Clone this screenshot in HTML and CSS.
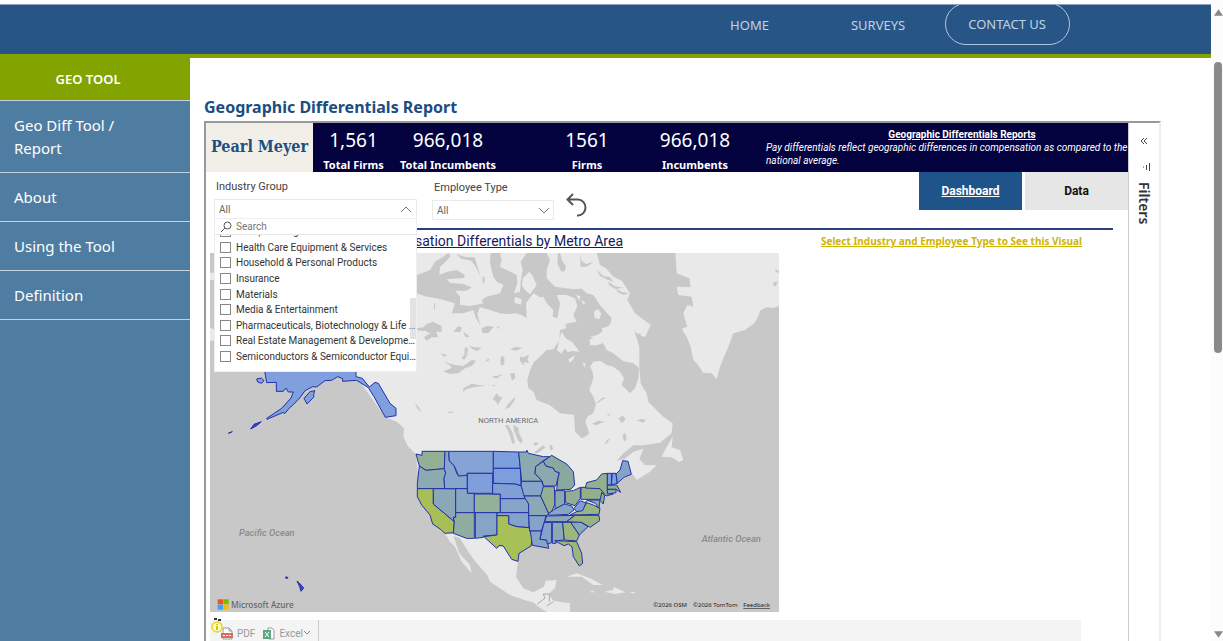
FILE: index.html
```
<!DOCTYPE html>
<html lang="en">
  <head>
    <meta charset="UTF-8" />
    <meta name="viewport" content="width=device-width, initial-scale=1" />
    <title>Geographic Differentials Report</title>
    <link rel="stylesheet" href="styles.css">
  </head>
  <body>
    <div class="page">
      <header class="topbar">
        <nav class="topnav">
          <a href="#">HOME</a>
          <a href="#">SURVEYS</a>
          <a href="#" class="pill">CONTACT US</a>
        </nav>
      </header>

      <div class="columns">
        <!-- Side menu -->
        <nav class="sidebar">
          <div class="side-title">GEO TOOL</div>
          <a href="#">Geo Diff Tool / Report</a>
          <a href="#">About</a>
          <a href="#">Using the Tool</a>
          <a href="#">Definition</a>
        </nav>

        <main class="content">
          <h1>Geographic Differentials Report</h1>

          <div class="frame">
            <section class="report">
              <!-- Totals -->
              <div class="banner">
                <div class="logo">Pearl Meyer</div>
                <div class="card card-small"><strong>1,561</strong><span>Total Firms</span></div>
                <div class="card"><strong>966,018</strong><span>Total Incumbents</span></div>
                <div class="card card-gap"><strong>1561</strong><span>Firms</span></div>
                <div class="card"><strong>966,018</strong><span>Incumbents</span></div>
                <div class="about">
                  <h2>Geographic Differentials Reports</h2>
                  <p>Pay differentials reflect geographic differences in compensation as compared to the national average.</p>
                </div>
              </div>

              <!-- Slicers and tabs -->
              <div class="controls">
                <div class="slicer slicer-industry">
                  <label for="industry">Industry Group</label>
                  <button class="slicer-box" id="industry" aria-expanded="true">All
                    <svg class="chevron" viewBox="0 0 12 7"><path d="M1 6l5-5 5 5" /></svg>
                  </button>
                  <div class="menu">
                    <div class="menu-search">
                      <svg viewBox="0 0 12 12"><circle cx="7.500" cy="4.500" r="3.500" /><path d="M5 7L1 11" /></svg>
                      <input type="text" placeholder="Search" aria-label="Search" />
                    </div>
                    <div class="menu-view">
                      <ul>
                        <li><label><input type="checkbox" /><span>Food, Beverage &amp; Tobacco</span></label></li>
                        <li><label><input type="checkbox" /><span>Health Care Equipment &amp; Services</span></label></li>
                        <li><label><input type="checkbox" /><span>Household &amp; Personal Products</span></label></li>
                        <li><label><input type="checkbox" /><span>Insurance</span></label></li>
                        <li><label><input type="checkbox" /><span>Materials</span></label></li>
                        <li><label><input type="checkbox" /><span>Media &amp; Entertainment</span></label></li>
                        <li><label><input type="checkbox" /><span>Pharmaceuticals, Biotechnology &amp; Life Sciences</span></label></li>
                        <li><label><input type="checkbox" /><span>Real Estate Management &amp; Development</span></label></li>
                        <li><label><input type="checkbox" /><span>Semiconductors &amp; Semiconductor Equipment</span></label></li>
                        <li><label><input type="checkbox" /><span>Software &amp; Services</span></label></li>
                      </ul>
                      <div class="menu-thumb"></div>
                    </div>
                  </div>
                </div>
                <div class="slicer slicer-type">
                  <label for="type">Employee Type</label>
                  <div class="select-wrap">
                    <select class="slicer-box" id="type"><option>All</option></select>
                    <svg class="chevron" viewBox="0 0 12 7"><path d="M1 1l5 5 5-5" /></svg>
                  </div>
                </div>
                <button class="undo" aria-label="Reset">
                  <svg viewBox="0 0 22 24"><path d="M7 1L1.500 6.500 7 12M2 6.500h10a7.500 8 0 0 1 0 16h-1" /></svg>
                </button>
                <div class="tabs">
                  <button class="tab active">Dashboard</button>
                  <button class="tab">Data</button>
                </div>
              </div>

              <div class="titles">
                <h2 class="map-title">Compensation Differentials by Metro Area</h2>
                <p class="hint">Select Industry and Employee Type to See this Visual</p>
              </div>

              <!-- Map -->
              <svg class="map" viewBox="-570 9 1707 1077">
                <g class="land">
                  <path d="M-135 9H590L600 45 618 55 640 80 665 92 690 130 682 150 705 190 752 225 735 262 705 248 718 290 718 350 722 400 740 430 745 455 790 500 818 520 815 550 780 578 730 586 700 586 670 610 650 632 672 628 700 605 730 596 718 628 735 645 770 646 750 665 710 690 698 672 660 690 640 715 600 760 590 800 560 825 535 850 530 870 450 875 400 870 360 900 300 870 160 850 140 830 60 740 48 612 25 590 10 560 12 535-10 515-45 500-135 375Z" />
                  <path d="M818 560L800 590 785 620 815 622 838 636 850 630 840 600 815 592Z" />
                  <path d="M826 9H1137V168L1118 174 1100 172 1082 180 1072 205 1060 222 1035 240 1000 250 985 290 968 330 960 350 950 388 935 370 910 368 890 340 880 330 872 290 860 260 845 236 862 230 850 190 862 165 880 170 875 140 835 135 830 110 872 112 868 85 830 70Z" />
                  <path d="M-570 68h14v22h-14ZM-570 232l14 8v30l-14 4Z" />
                </g>
                <g class="land" transform="translate(0 540)">
                  <path d="M134 310L250 318 290 355 310 348 335 388 354 394 348 440 370 475 400 487 432 470 437 452 470 450 465 475 445 492 460 512 510 520V546H440L412 528 400 517 380 512 330 495 270 455 262 435 230 400 205 365 180 325 160 318 178 370 210 405 215 430 185 395 165 350 150 335Z" />
                  <path d="M500 440L530 430 570 445 608 465 580 465 545 440ZM612 485L640 480 640 470 677 487 645 492ZM568 487h18l-8-5ZM690 486h16l-8 5Z" />
                </g>
                <!-- lakes, bays and channels -->
                <g class="water">
                  <path d="M50 75L70 68 90 60 105 35 130 20 145 9 152 18 140 32 120 50 118 75 140 66 170 60 195 75 190 84 140 88 150 98 190 102 215 112 200 122 165 122 180 140 180 165 210 168 250 160 245 150 260 140 300 130 310 105 290 95 280 80 270 40 272 9 300 9 305 30 300 50 325 62 350 75 352 100 342 130 360 125 362 95 368 60 362 35 380 9 440 9 450 30 440 60 440 85 465 110 520 118 545 116 560 130 580 135 600 165 635 205 632 220 615 240 590 256 570 260 590 268 610 280 620 300 640 310 670 334 700 340 718 355 715 385 705 415 690 430 665 405 672 385 660 365 640 350 620 345 600 332 580 335 570 350 578 365 580 385 568 420 580 440 588 462 580 490 562 500 556 515 568 550 556 560 545 565 530 550 525 545 522 495 500 492 480 490 450 466 410 450 400 425 385 415 382 390 390 360 402 335 415 325 440 300 460 298 478 270 480 240 500 235 495 222 530 215 520 195 532 168 525 145 500 135 470 135 480 160 472 205 458 200 460 180 440 160 430 140 420 142 400 130 385 150 378 160 380 205 365 195 345 190 320 192 300 190 270 180 240 172 232 190 240 225 228 205 220 180 190 190 155 190 160 175 165 160 130 150 110 145 80 140 50 130Z" />
                  <path d="M50 235L70 232 80 222 100 215 112 222 125 228 125 245 108 245 115 262 95 262 80 272 72 262 90 250 75 242 55 242ZM130 335L165 345 190 348 215 330 228 332 215 348 195 355 175 370 150 372 130 364 155 354 150 346ZM190 415l25-14 20 4 22 2-30 3-28 8-10 8ZM290 430l8 10 10 0-8 14-8 12-2-10-12-8ZM345 440l-22 24-8 14 14-6 14-20ZM245 235l18-8 18 4-16 18-18 0ZM160 245l14-16 12 4-6 14ZM305 315l8 8 0 20-10 4-2-16ZM330 298l18-8 20 4-22 8ZM360 320l10 2 18-8-6 14 6 12-16-4 0 12-12-16ZM275 378l14 0 20-6-20 14ZM330 370l14 0 2 14-10 8ZM315 525l10 0 12 22 8 32-8 2-8-26ZM340 525l16 8 0 14 12 24-4 10-10-10-12-28ZM575 522l20-10 20 4-14 4-10 6ZM655 505l14-8 8 12-12 10ZM710 512l14-6 14 4-10 8-10-4ZM615 580l8-12 8-4-12 18ZM668 555l8-6 4 18-8 8ZM45 460l12 12 8 16-14-14ZM145 485h14v4h-14ZM400 575l8 4 8-4-4 10-8 2ZM590 457l18-14 12 0-16 8-10 8ZM102 160h3v18h-3ZM190 245l20 15-14 2ZM205 285l12 6 28 2-14 10-14-6ZM120 310l20 4-6 6ZM185 325l10-14 6 6-8 12ZM195 290l10 6-4 14 8 6-16-4ZM635 262l14 6-4 14-10-6ZM290 228l10 6-6 2ZM255 335l10-10 4 6ZM275 405h12l-6 4ZM430 400l8-4-6-2ZM620 492l10 0-2 6ZM448 588l6-4 6 12-8 6ZM400 610l30-25 6 8-22 16ZM750 9l8 0ZM725 400l12 14-6 4Z" />
                  <path d="M480 9l6 22 12 18-4 14-10 2-12-24 2-32ZM540 10l4 22 14 10 22-6-20 14-18 0ZM168 12l30 10 26 0 18 60-14-30-14-20-30-6ZM248 80h6v18h-6ZM590 60l20 18 20 4 10 14-20-8-20-10ZM625 95l20 14 24 4-22 4-20-12ZM650 118l16 8 22 4-18 4-18-8ZM700 240l14 12 10-2-8 10ZM640 230l20 20 18 36-20-20ZM1125 55l8 8 4-2v8l-10-4ZM1120 98l12-4-4 16-10-6Z" />
                </g>
                <!-- islands inside the bays -->
                <g class="land">
                  <path d="M582 185l12-8 10 14-6 16-14-2ZM570 268l18-6 20 18-18 6-20 0ZM505 328l20-12-6 14-10 8ZM548 340l8 0-2 14ZM485 245l12 20 20 12 22 28-24-2-12 4-8-12-12 16-12-10 6-30ZM368 85l20-20 10 12 12 28-20 28-14-12-10-14ZM345 140l20 8-2 16-20-6ZM305 15l45-4 6 16-12 22-14 12-22-22ZM605 235l30-10 22 14 8 16 22 14 8 36 22 36-20-6-20-22-20-6-18-24-26-22ZM528 135l14 4-4 12ZM545 150l12 8-8 6Z" />
                </g>

                <g class="states">
                  <path fill="#7f9fdf" d="M-405 330V369L-400 398-371 397V424L-350 424-342 414-335 426-320 426-327 444-355 475-400 505-399 508-352 488-345 490-330 472-322 466-300 443-285 422-262 410-250 411-225 392-205 391-187 380-172 386-172 394-130 391-95 413-78 440-44 502-12 497-12 475-30 460-65 400-75 397-92 411-113 385-132 380V330ZM-288 445l18-20 14-3-3 12 0 8-20 20ZM-430 387l14-3 8 8-7 8-12-4Z" />
                  <path fill="#3348c8" d="M-515 550l12-5ZM-344 981l8 1-4 5ZM-309 993l6 5 14 16-8 10-4-14ZM-448 537l10-14 22-8-14 12Z" />
                </g>
                <g class="states" transform="translate(0 540)">
                  <path fill="#94b094" d="M66 64H135L133 116 78 121 58 108 48 72 66 76Z" />
                  <path fill="#8cabb0" d="M58 108L78 121 133 116 137 130 132 145 134 176H52V160Z" />
                  <path fill="#a8bf58" d="M52 176H100V222L163 275 160 308 134 310 122 298 98 282 90 255 65 225 52 200Z" />
                  <path fill="#8aa8b8" d="M100 176H167V262H160L163 275 100 222Z" />
                  <path fill="#86a6cc" d="M135 64H146L148 92 163 108 170 130 176 138 202 132V176H134L132 145 137 130 133 116Z" />
                  <path fill="#85a3d4" d="M146 64H280V130H202L200 136 176 138 163 108 148 92Z" />
                  <path fill="#7f9fdc" d="M202 130H278V190H202Z" />
                  <path fill="#87a7c0" d="M167 176H202V190H223V248H167Z" />
                  <path fill="#93b098" d="M223 192H301V248H223Z" />
                  <path fill="#90ae9f" d="M167 248H223V325H200L160 310 163 275 160 262H167Z" />
                  <path fill="#85a4c8" d="M226 248H291V315L250 318V322L226 325Z" />
                  <path fill="#7c9fde" d="M280 64L356 66 361 115H280Z" />
                  <path fill="#7d9edc" d="M280 115H361L363 167 345 162 280 160Z" />
                  <path fill="#809fd2" d="M278 160L345 162 365 168 376 206H301V192H278Z" />
                  <path fill="#85a5c8" d="M301 206H378L386 222V248H301Z" />
                  <path fill="#84a3c8" d="M291 248H386L387 293 350 290 326 282V257H291Z" />
                  <path fill="#a8c058" d="M291 257H326V282L350 290 387 293 397 325 393 348 357 370 354 394 335 388 310 348 298 346 290 355 252 320 291 315Z" />
                  <path fill="#8ba9b0" d="M356 66H380V60L385 70 430 80 450 80 430 92 407 110 405 130 427 154H365L361 115Z" />
                  <path fill="#86a5c8" d="M365 154H425L433 175 422 198H372L363 165Z" />
                  <path fill="#8aa9b4" d="M372 198H422L432 220 446 250 438 258 386 257V222L376 206Z" />
                  <path fill="#83a3cc" d="M386 257H438L432 280 424 303H389Z" />
                  <path fill="#84a4c8" d="M391 303H424L420 328 442 330 446 355 420 350 397 346Z" />
                  <path fill="#8ca9b0" d="M407 110L430 94 438 108 460 114 465 124 478 128 468 168H430L427 154 405 130Z" />
                  <path fill="#88a9a0" d="M430 94L455 76 500 102 520 125 524 165 512 178 470 180 474 145 478 128 465 124 460 114 438 108Z" />
                  <path fill="#93b090" d="M430 170H463L465 222 455 245 446 250 432 220 422 198Z" />
                  <path fill="#8aa9ac" d="M465 182H494V222L465 237Z" />
                  <path fill="#93af93" d="M496 184L520 182 541 172V205L525 227 496 218Z" />
                  <path fill="#87a6c4" d="M446 250L465 237 494 222 515 228 522 240 505 253 446 256Z" />
                  <path fill="#8aa9b4" d="M440 258L525 256 500 275H434Z" />
                  <path fill="#83a3cc" d="M432 278L455 277V338L442 342 440 330 420 328Z" />
                  <path fill="#8aa9b0" d="M457 277H488L493 330 470 332 468 340H457Z" />
                  <path fill="#9cb77c" d="M488 277H512L538 315 530 333 493 330Z" />
                  <path fill="#9cb77c" d="M464 332L530 335 545 370 548 400 538 408 520 380 516 350 505 342 492 347 475 338Z" />
                  <path fill="#8aa9b8" d="M512 277L540 275 564 290 538 315Z" />
                  <path fill="#98b47e" d="M525 256H597L599 272 570 292 545 277 500 275Z" />
                  <path fill="#9ab680" d="M510 255L550 235 560 218 580 225 600 235 597 253Z" />
                  <path fill="#809fd8" d="M522 235L541 212 555 218 560 214 548 242 530 245Z" />
                  <path fill="#8aa9b0" d="M560 210H600L597 235 586 220Z" />
                  <path fill="#93b086" d="M543 172H600L612 190 603 208H543Z" />
                  <path fill="#8fae9a" d="M605 188L614 196 610 222 600 212Z" />
                  <path fill="#93b28c" d="M556 174L560 158 590 150 605 132 622 130V185L640 192 618 198 600 176Z" />
                  <path fill="#7c9fe0" d="M622 130H636L634 165H622ZM636 130H648L652 160 634 165Z" />
                  <path fill="#84a3c8" d="M648 132L660 120 668 92 684 94 694 133 672 142 652 160Z" />
                  <path fill="#90b090" d="M622 166L650 165 662 187 648 178 622 178Z" />
                  <path fill="#8aa9b0" d="M622 178H648V188L622 192Z" />
                </g>
                <path class="border" d="M430 1032L435 1045 412 1062M430 1032H448V1055M440 1068L460 1055" />

                <text class="map-label" x="235" y="518">NORTH AMERICA</text>
                <text class="map-label ocean" x="-483" y="857">Pacific Ocean</text>
                <text class="map-label ocean" x="905" y="877">Atlantic Ocean</text>
                <path fill="#f05125" d="M-547 1048h16v15h-16Z" />
                <path fill="#7eb900" d="M-530 1048h16v15h-16Z" />
                <path fill="#3fa4f0" d="M-547 1064h16v15h-16Z" />
                <path fill="#fdb900" d="M-530 1064h16v15h-16Z" />
                <text class="azure" x="-507" y="1073">Microsoft Azure</text>
                <text class="credit" x="760" y="1071">©2026 OSM</text>
                <text class="credit" x="879" y="1071">©2026 TomTom</text>
                <a href="#"><text class="credit underlined" x="1030" y="1071">Feedback</text></a>
              </svg>

              <!-- Export toolbar -->
              <div class="toolbar">
                <svg class="info" viewBox="0 0 12 16"><path d="M3 0h3v2H3zM7 1h3v2H7z" fill="#333" /><circle cx="6" cy="9" r="5" fill="#fffbd0" stroke="#e6d526" stroke-width="1.500" /><path d="M5 6h2v1H5zM5 8h2v4H5z" fill="#d8c400" /></svg>
                <button class="export">
                  <svg viewBox="0 0 12 13"><path d="M2 6V1h6l3 3v8H2z" fill="#fff" stroke="#999" /><path d="M8 1v3h3" fill="none" stroke="#999" /><path d="M0 6h12v5H0z" fill="#d9705f" /><path d="M2 8.500h2M5 8.500h2M8 8.500h2" stroke="#fff" /></svg>
                  PDF
                </button>
                <button class="export">
                  <svg viewBox="0 0 12 13"><path d="M5 3V1h4l2 2v9H6" fill="#fff" stroke="#999" /><path d="M0 3h8v9H0z" fill="#5fa583" /><path d="M2 5l4 5M6 5l-4 5" stroke="#fff" /></svg>
                  Excel
                  <svg class="caret" viewBox="0 0 6 4"><path d="M0 0l3 3 3-3" fill="none" stroke="#888" /></svg>
                </button>
              </div>
            </section>

            <!-- Collapsed filter pane -->
            <aside class="filters">
              <svg class="collapse" viewBox="0 0 8 8"><path d="M4 1L1 4l3 3M7 1L4 4l3 3" /></svg>
              <svg class="filter-icon" viewBox="0 0 8 9"><path d="M7.500 0v8M4.500 2v5M1.500 3.500v1" /></svg>
              <span>Filters</span>
            </aside>
          </div>
        </main>
      </div>
    </div>

    <div class="scrollbar">
      <svg viewBox="0 0 10 7"><path d="M5 0l5 7H0z" /></svg>
      <div class="scroll-thumb"></div>
      <svg class="scroll-down" viewBox="0 0 10 7"><path d="M0 0h10L5 7z" /></svg>
    </div>
  </body>
</html>
```
FILE: styles.css
```
* { box-sizing: border-box; }
body {
  margin: 0;
  height: 100vh;
  display: flex;
  overflow: hidden;
  font-family: "Segoe UI", "Noto Sans", sans-serif;
  background: #fff;
}
h1, h2, p, ul { margin: 0; padding: 0; }
button, input, select { font-family: inherit; }
button { cursor: pointer; border: none; }
.page {
  flex: 1;
  display: flex;
  flex-direction: column;
  padding-top: 4px;
}

/* Header */
.topbar {
  flex: none;
  height: 54px;
  background: #275586;
  border-top: 1px solid #8fa5bd;
  border-bottom: 4px solid #82a300;
  overflow: hidden;
}
.topnav {
  display: flex;
  justify-content: flex-end;
  align-items: flex-end;
  height: 100%;
  padding: 0 141px 9px 0;
}
.topnav a {
  color: #c3d2e2;
  font-size: 13px;
  line-height: 40px;
  text-decoration: none;
  margin-right: 82px;
}
.topnav a.pill {
  border: 1px solid #b4c6d9;
  border-radius: 21px;
  padding: 0 23px 0 22px;
  margin: 0 0 0 -42px;
}

/* Side menu */
.columns { flex: 1; display: flex; min-height: 0; }
.sidebar {
  width: 190px;
  flex: none;
  background: #4f7da2;
}
.side-title {
  background: #82a300;
  color: #fff;
  font-size: 13px;
  font-weight: 600;
  line-height: 42px;
  padding-right: 14px;
  text-align: center;
  border-bottom: 1px solid #c3d3df;
}
.sidebar a {
  display: block;
  padding: 13px 60px 12px 14px;
  color: #fff;
  font-size: 15px;
  line-height: 23px;
  text-decoration: none;
  border-bottom: 1px solid #c3d3df;
}

/* Report */
.content {
  flex: 1;
  min-width: 0;
  display: flex;
  flex-direction: column;
  padding: 37px 50px 0 14px;
}
h1 {
  color: #1b4d80;
  font-size: 16px;
  line-height: 24px;
  margin-bottom: 2px;
}
.frame {
  flex: 1;
  min-height: 0;
  display: flex;
  border: 2px solid #999;
  border-right-color: #eee;
  border-bottom: none;
}
.report { flex: 1; min-width: 0; }
.banner {
  display: flex;
  height: 49px;
  background: #03023f;
  color: #fff;
}
.logo {
  width: 107px;
  background: #f2efe8;
  color: #20507f;
  font: bold 16px/47px "DejaVu Serif Condensed", "DejaVu Serif", serif;
  text-align: center;
  white-space: nowrap;
}
.card {
  width: 108px;
  text-align: center;
  white-space: nowrap;
}
.card-small { width: 81px; }
.card-gap { margin-left: 31px; }
.card strong {
  display: block;
  font-size: 19px;
  font-weight: 400;
  line-height: 34px;
}
.card span {
  display: block;
  font-size: 11px;
  font-weight: 700;
  line-height: 15px;
}
.about {
  flex: 1;
  padding: 5px 0 0 17px;
  font-family: Roboto, sans-serif;
  font-size: 10px;
  line-height: 13px;
}
.about h2 {
  padding-left: 30px;
  font-size: 10px;
  text-align: center;
  text-decoration: underline;
}
.about p { font-style: italic; }

/* Slicers */
.controls {
  display: flex;
  height: 56px;
  margin: 0 0 0 8px;
  color: #444;
  font-family: Roboto, sans-serif;
}
.slicer label { display: block; font-size: 11px; line-height: 15px; padding-left: 2px; }
.slicer-industry { position: relative; width: 203px; padding-top: 7px; }
.slicer-type { width: 122px; margin-left: 15px; padding-top: 8px; }
.slicer-box {
  display: flex;
  align-items: center;
  justify-content: space-between;
  width: 100%;
  height: 20px;
  margin-top: 5px;
  padding: 0 4px;
  border: 1px solid #eaeaea;
  background: #fff;
  color: #666;
  font-size: 10px;
  appearance: none;
}
.select-wrap { position: relative; }
.chevron { width: 12px; height: 7px; fill: none; stroke: #777; }
.select-wrap .chevron { position: absolute; right: 4px; top: 7px; }
.menu {
  position: absolute;
  top: 46px;
  left: 0;
  right: 0;
  height: 154px;
  z-index: 2;
  background: #fff;
  border: 1px solid #eee;
}
.menu-search {
  display: flex;
  align-items: center;
  gap: 4px;
  height: 16px;
  padding-left: 5px;
  border-bottom: 1px solid #e6e6e6;
}
.menu-search svg { width: 12px; height: 12px; fill: none; stroke: #555; }
.menu-search input { border: none; outline: none; padding: 0; font-size: 10px; }
.menu-search input::placeholder { color: #777; }
.menu-view {
  position: relative;
  height: 132px;
  overflow: hidden;
}
/* list is scrolled part of the way down */
.menu ul {
  display: flex;
  flex-direction: column;
  height: 156px;
  margin-top: -11px;
  list-style: none;
}
.menu li { flex: 1; }
.menu label { display: flex; align-items: center; gap: 5px; height: 100%; padding-left: 5px; font-size: 10px; color: #333; }
.menu label span { flex: 1; overflow: hidden; white-space: nowrap; text-overflow: ellipsis; }
.menu input[type="checkbox"] {
  appearance: none;
  width: 11px;
  height: 11px;
  margin: 0;
  border: 1px solid #888;
  background: #fff;
}
.menu-thumb {
  position: absolute;
  right: 0;
  top: 63px;
  width: 6px;
  height: 41px;
  background: rgba(200, 200, 200, 0.5);
}
.undo { background: none; padding: 0; width: 22px; height: 24px; margin: 21px 0 0 12px; }
.undo svg { display: block; width: 22px; height: 24px; fill: none; stroke: #555; stroke-width: 2; }
.tabs { display: flex; gap: 3px; height: 38px; margin-left: auto; }
.tab { width: 103px; background: #e6e6e6; color: #111; font-size: 12px; font-weight: 700; }
.tab.active { background: #1f548b; color: #fff; text-decoration: underline; }
.titles {
  display: flex;
  justify-content: space-between;
  height: 24px;
  margin: 0 15px 0 8px;
  padding-right: 31px;
  border-top: 2px solid #2c3f7d;
  line-height: 22px;
}
.map-title {
  width: 409px;
  text-align: right;
  color: #1a1a5e;
  font-family: Roboto, sans-serif;
  font-size: 14px;
  font-weight: 400;
  text-decoration: underline;
}
.hint {
  font-family: "Comic Sans MS", "Noto Sans", sans-serif;
  font-size: 10px;
  font-weight: 700;
  color: #d0b400;
  text-decoration: underline;
}

/* Map */
.map {
  display: block;
  width: 569px;
  height: 359px;
  margin: 1px 0 8px 4px;
  background: #c8c8c8;
}
.land { fill: #e9e9e9; }
.water { fill: #c8c8c8; }
.states { stroke: #2430a8; stroke-width: 3; stroke-linejoin: round; }
.border { fill: none; stroke: #aaa; stroke-width: 3; }
.map-label { font: 23px Roboto, sans-serif; fill: #6c6c78; }
.map-label.ocean { font-style: italic; font-weight: 500; font-size: 28px; fill: #8a8a8a; }
.azure { font-size: 25px; font-weight: 500; fill: #666; }
.credit { font-size: 18px; fill: #222; }
.underlined { text-decoration: underline; }

/* Toolbar */
.toolbar {
  position: relative;
  display: flex;
  height: 40px;
  margin: 0 47px 0 4px;
  padding-left: 11px;
  background: #f4f4f4;
}
.info { position: absolute; left: 1px; top: -2px; width: 12px; height: 16px; }
.export {
  display: flex;
  align-items: center;
  gap: 4px;
  height: 26px;
  padding: 0 8px 0 0;
  background: none;
  color: #999;
  font-family: Roboto, sans-serif;
  font-size: 10px;
}
.export svg { width: 12px; height: 13px; }
.export .caret { width: 6px; height: 4px; margin-left: -3px; }
.export:last-child { border-right: 1px solid #ccc; }

/* Filter pane */
.filters {
  width: 31px;
  flex: none;
  display: flex;
  flex-direction: column;
  align-items: center;
  padding-top: 14px;
  border-left: 1px solid #ccc;
}
.filters svg { fill: none; stroke: #444; }
.collapse { width: 8px; height: 8px; }
.filter-icon { width: 8px; height: 9px; margin: 18px 0 10px 4px; }
.filters span { writing-mode: vertical-rl; font-size: 14px; font-weight: 600; line-height: 20px; color: #333; }

/* Window scrollbar */
.scrollbar {
  width: 12px;
  flex: none;
  display: flex;
  flex-direction: column;
  align-items: center;
  padding: 9px 0 3px 2px;
  background: #fcfcfc;
}
.scrollbar svg { width: 9px; height: 7px; fill: #888; }
.scroll-thumb { width: 8px; height: 291px; margin-top: 46px; border-radius: 4px; background: #8a8a8a; }
.scroll-down { margin-top: auto; }
```
